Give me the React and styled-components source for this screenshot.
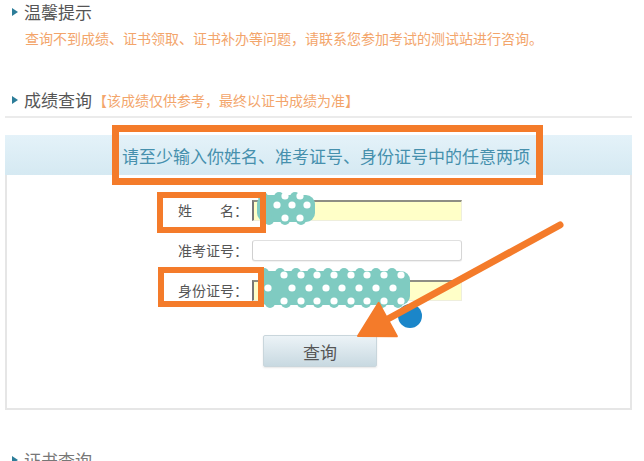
import React from 'react';
import styled, { createGlobalStyle } from 'styled-components';

const ORANGE = '#f47b2a';
const TEAL = '#7fcbc1';

const GlobalStyle = createGlobalStyle`
  html, body { margin: 0; padding: 0; background: #fff; overflow: hidden; }
  body { font-family: "Noto Sans CJK SC", "Noto Sans", sans-serif; }
`;

const Page = styled.div`
  position: relative;
  width: 644px;
  height: 461px;
  box-sizing: border-box;
  padding: 0 12px 0 5px;
  overflow: hidden;
`;

const SectionTitle = styled.h2`
  margin: ${p => p.$mt || 0}px 0 0;
  padding-left: 7px;
  display: flex;
  align-items: center;
  height: 24px;
  font-size: 17px;
  font-weight: normal;
  line-height: 24px;
  color: ${p => p.$dim ? '#777' : '#555'};
  white-space: nowrap;
  &::before {
    content: '';
    width: 0;
    height: 0;
    border-left: 6px solid #2c7d99;
    border-top: 4px solid transparent;
    border-bottom: 4px solid transparent;
    margin-right: 6px;
  }
`;

const Note = styled.span`
  font-size: 14px;
  color: #f3a56b;
  margin-left: 1px;
`;

const Notice = styled.p`
  margin: 4px 0 0;
  padding-left: 20px;
  font-size: 14px;
  line-height: 20px;
  color: #f3a56b;
  white-space: nowrap;
`;

const Divider = styled.div`
  margin-top: 4px;
  border-top: 2px solid #ebebeb;
`;

const Panel = styled.section`
  margin-top: 17px;
`;

const PanelHeader = styled.div`
  height: 40px;
  display: flex;
  justify-content: center;
  padding-left: 15px;
  background: linear-gradient(#e4f2f9, #d5e9f2);
`;

const HeaderText = styled.div`
  position: relative;
  display: flex;
  align-items: center;
  font-size: 17px;
  color: #4690ad;
  white-space: nowrap;
`;

const Highlight = styled.span`
  position: absolute;
  top: ${p => p.$t}px;
  right: ${p => p.$r}px;
  bottom: ${p => p.$b}px;
  left: ${p => p.$l}px;
  border: ${p => p.$w || 6}px solid ${ORANGE};
  pointer-events: none;
  z-index: 2;
`;

const PanelBody = styled.div`
  border: 2px solid #e6e6e6;
  border-top: none;
  padding: 25px 0 41px 3px;
  display: flex;
  flex-direction: column;
  align-items: center;
`;

const Form = styled.div`
  display: flex;
  flex-direction: column;
  gap: 19px;
`;

const Row = styled.div`
  display: flex;
  height: 21px;
`;

const Label = styled.label`
  position: relative;
  width: 74px;
  padding-right: 4px;
  box-sizing: border-box;
  text-align: right;
  font-size: 14px;
  line-height: 21px;
  color: #555;
  white-space: pre;
`;

const InputBox = styled.div`
  position: relative;
  width: 210px;
  height: 21px;
  box-sizing: border-box;
  background: ${p => p.$filled ? '#ffffc8' : '#fff'};
  border: 1px solid ${p => p.$filled ? '#eeeedd' : '#d6d6d6'};
  border-top: ${p => p.$filled ? '2px solid #8e8e84' : '1px solid #e0e0e0'};
  border-left: ${p => p.$filled ? '2px solid #777' : '1px solid #d0d0d0'};
  border-radius: ${p => p.$filled ? 0 : 3}px;
  box-shadow: ${p => p.$filled ? 'none' : '0 1px 1px rgba(0,0,0,0.06)'};
`;

const BlobSvg = styled.svg`
  position: absolute;
  left: ${p => p.$x}px;
  top: ${p => p.$y}px;
  z-index: 1;
  overflow: visible;
`;

const QueryButton = styled.button`
  margin-top: 34px;
  width: 114px;
  height: 32px;
  border: 1px solid #c9d6dc;
  border-radius: 2px;
  background: linear-gradient(#ecf3f7, #c8d9e1);
  font-family: "Noto Sans CJK SC", sans-serif;
  font-size: 17px;
  color: #555;
  box-shadow: 0 1px 2px rgba(0,0,0,0.1);
  padding: 0;
`;

const ArrowLayer = styled.svg`
  position: absolute;
  left: 0;
  top: 0;
  z-index: 3;
  pointer-events: none;
`;

function Blob({ x, y, w, h, rows }) {
  const bumps = [];
  for (let bx = 8; bx <= w - 8; bx += 16) {
    bumps.push(<circle key={'t' + bx} cx={bx} cy={5} r={5} fill={TEAL} />);
    bumps.push(<circle key={'b' + bx} cx={bx + 6} cy={h - 5} r={5} fill={TEAL} />);
  }
  return (
    <BlobSvg $x={x} $y={y} width={w} height={h} viewBox={`0 0 ${w} ${h}`}>
      <rect x={2} y={3} width={w - 4} height={h - 6} rx={9} fill={TEAL} />
      {bumps}
      {rows.map((r, i) =>
        r.xs.map(dx => <circle key={i + '-' + dx} cx={dx} cy={r.y} r={3.6} fill="#fff" />)
      )}
    </BlobSvg>
  );
}

const idRows = [
  { y: 7, xs: [28, 45, 61, 78, 95, 111, 128, 145] },
  { y: 20, xs: [12, 36, 53, 70, 86, 103, 120, 137] },
  { y: 33, xs: [28, 45, 61, 78, 95, 111, 128, 145] },
];

const nameRows = [
  { y: 4, xs: [30, 45] },
  { y: 13, xs: [22, 37, 52] },
  { y: 26, xs: [30, 45] },
];

export default function App() {
  return (
    <>
      <GlobalStyle />
      <Page>
        <SectionTitle>温馨提示</SectionTitle>
        <Notice>查询不到成绩、证书领取、证书补办等问题，请联系您参加考试的测试站进行咨询。</Notice>

        <SectionTitle $mt={40}>
          成绩查询<Note>【该成绩仅供参考，最终以证书成绩为准】</Note>
        </SectionTitle>
        <Divider />

        <Panel>
          <PanelHeader>
            <HeaderText>
              请至少输入你姓名、准考证号、身份证号中的任意两项
              <Highlight $t={-10} $r={-13} $b={-10} $l={-10} $w={7} />
            </HeaderText>
          </PanelHeader>
          <PanelBody>
            <Form>
              <Row>
                <Label>
                  {'姓　　名：'}
                  <Highlight $t={-8} $r={-14} $b={-12} $l={-21} />
                </Label>
                <InputBox $filled>
                  <Blob x={1} y={-10} w={62} h={33} rows={nameRows} />
                </InputBox>
              </Row>
              <Row>
                <Label>准考证号：</Label>
                <InputBox />
              </Row>
              <Row>
                <Label>
                  身份证号：
                  <Highlight $t={-13} $r={-12} $b={-6} $l={-20} />
                </Label>
                <InputBox $filled>
                  <Blob x={2} y={-14} w={156} h={40} rows={idRows} />
                </InputBox>
              </Row>
            </Form>
            <QueryButton type="button">查询</QueryButton>
          </PanelBody>
        </Panel>

        <SectionTitle $mt={38} $dim>证书查询</SectionTitle>

        <ArrowLayer width="644" height="461" viewBox="0 0 644 461">
          <circle cx="410" cy="316" r="12" fill="#1b86c9" />
          <line x1="560" y1="225" x2="386" y2="320" stroke={ORANGE} strokeWidth="7" strokeLinecap="round" />
          <polygon points="358,336 378.7,302.9 396.9,336.3" fill={ORANGE} strokeLinejoin="round" stroke={ORANGE} strokeWidth="2" />
        </ArrowLayer>
      </Page>
    </>
  );
}
